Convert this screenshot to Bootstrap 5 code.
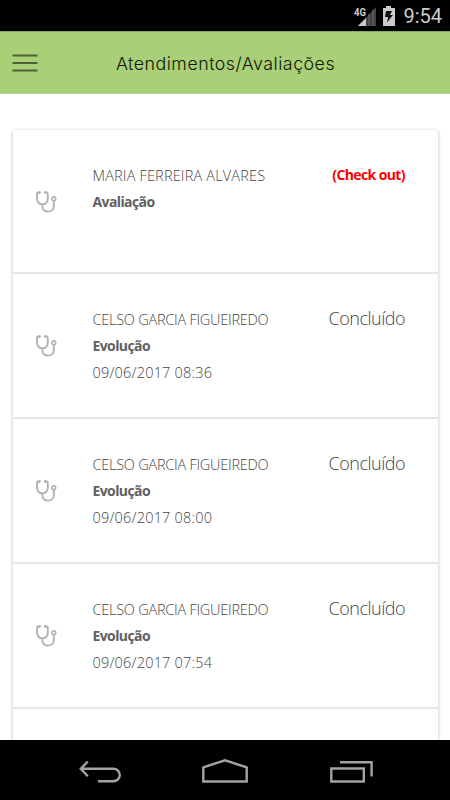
<!DOCTYPE html>
<html lang="pt-BR">
<head>
<meta charset="utf-8">
<meta name="viewport" content="width=device-width, initial-scale=1">
<title>Atendimentos/Avaliações</title>
<link href="https://cdn.jsdelivr.net/npm/bootstrap@5.3.0/dist/css/bootstrap.min.css" rel="stylesheet">
<style>
body{font-family:"Open Sans","Noto Sans",sans-serif;color:#555}
.phone{width:450px;height:800px}
.status{height:31px;color:#ccc;padding:2px 8px 0 0;font:20px/31px Roboto,sans-serif}
.topbar{height:63px;background:#a9cf77;border-top:1px solid #8cab62;border-bottom:1px solid #b9d88f}
.menu-btn{width:50px;line-height:0}
.page-title{font:300 17.8px/24px Inter,sans-serif;color:#10160a;letter-spacing:.5px;margin:2px 1px 0 0}
.visits{margin:36px 12.500px 0;border-radius:3px 3px 0 0;box-shadow:0 1px 3px 1px rgba(0,0,0,.17)}
.visits .visit{height:145px;border:0;border-bottom:2px solid #e6e6e6;padding:33px 32.500px 0 22.500px;background:#fff;color:#444}
.visits .visit:first-child{height:144px;padding-top:33px;border-radius:3px 3px 0 0}
.visit-icon{width:57.500px;padding-top:27px;line-height:0}
.line{line-height:26.3px;white-space:nowrap;font-size:14.5px}
.person{font-weight:300;letter-spacing:-.25px}
.person-wide{letter-spacing:.17px}
.kind{font-weight:700;font-size:14px;letter-spacing:-.6px;color:#606060}
.when{font-weight:300;letter-spacing:.2px}
.state{font-weight:300;font-size:18px;line-height:23px;letter-spacing:-.5px}
.checkout{font-weight:700;font-size:14px;line-height:24px;letter-spacing:-.6px;color:#f00}
.navkeys{height:60px}
</style>
<script src="https://cdn.jsdelivr.net/npm/bootstrap@5.3.0/dist/js/bootstrap.bundle.min.js"></script>
</head>
<body class="bg-white overflow-hidden">
<svg class="d-none"><symbol id="steth" viewBox="0 0 22 24"><g fill="none" stroke="#b2b2b2" stroke-width="1.9" stroke-linecap="round"><path d="M4.200 2.500H3.100Q2 2.500 2 3.800V8.500C2 12 4.400 14.400 7.400 14.400S12.800 12 12.800 8.500V3.800Q12.800 2.500 11.700 2.500H10.600M7.400 14.400V16.300C7.400 19.700 9.900 21.600 13 21.600S18.800 19.500 18.800 16.200V11"/><path d="M4.500 2.500V2.600M10.300 2.500V2.600" stroke-width="2.800"/><circle cx="18.800" cy="8.800" r="1.900" stroke-width="1.600"/></g></symbol></svg>
<div class="phone d-flex flex-column overflow-hidden">
  <div class="status bg-black d-flex justify-content-end align-items-center flex-shrink-0">
    <svg width="47" height="26" viewBox="0 0 47 26"><text x="2" y="12" textLength="12" lengthAdjust="spacingAndGlyphs" fill="#ccc" font-family="Roboto" font-size="10.500" font-weight="700">4G</text><path d="M24 3V22H6Z" fill="#444"/><path d="M14 14V22H6Z" fill="#ccc"/><path d="M17 10V22M21 6V22" stroke="#555" stroke-width="2"/><path d="M31 4H34V2H39V4H43V22H31Z" fill="#ccc"/><path d="M34 7H40L38 11H41L35 18.500L36 13H33Z" fill="#111"/></svg>
    <span class="ms-1">9:54</span>
  </div>
  <header class="topbar d-flex align-items-center flex-shrink-0">
    <div class="menu-btn"><svg width="40" height="30" viewBox="0 0 40 30"><path d="M12.500 7.500H37.500M12.500 15H37.500M12.500 22.500H37.500" stroke="#4e6036" stroke-width="2.200"/></svg></div>
    <div class="flex-grow-1 text-center pe-5"><span class="page-title d-inline-block">Atendimentos/Avaliações</span></div>
  </header>
  <main class="flex-grow-1 overflow-hidden">
    <div class="visits list-group list-group-flush">
      <div class="list-group-item visit d-flex"><div class="visit-icon"><svg width="22" height="24"><use href="#steth"/></svg></div><div class="flex-grow-1"><div class="line person person-wide">MARIA FERREIRA ALVARES</div><div class="line kind">Avaliação</div></div><div class="checkout">(Check out)</div></div>
      <div class="list-group-item visit d-flex"><div class="visit-icon"><svg width="22" height="24"><use href="#steth"/></svg></div><div class="flex-grow-1"><div class="line person">CELSO GARCIA FIGUEIREDO</div><div class="line kind">Evolução</div><div class="line when">09/06/2017 08:36</div></div><div class="state">Concluído</div></div>
      <div class="list-group-item visit d-flex"><div class="visit-icon"><svg width="22" height="24"><use href="#steth"/></svg></div><div class="flex-grow-1"><div class="line person">CELSO GARCIA FIGUEIREDO</div><div class="line kind">Evolução</div><div class="line when">09/06/2017 08:00</div></div><div class="state">Concluído</div></div>
      <div class="list-group-item visit d-flex"><div class="visit-icon"><svg width="22" height="24"><use href="#steth"/></svg></div><div class="flex-grow-1"><div class="line person">CELSO GARCIA FIGUEIREDO</div><div class="line kind">Evolução</div><div class="line when">09/06/2017 07:54</div></div><div class="state">Concluído</div></div>
      <div class="list-group-item visit"></div>
    </div>
  </main>
  <footer class="navkeys bg-black flex-shrink-0">
    <svg class="d-block" width="450" height="60" viewBox="0 740 450 60" fill="none" stroke="#a3a3a3" stroke-width="2.400"><path d="M98 781.300H113.500A6.200 6.200 0 0 0 113.500 768.800H81M87.800 761.500L80.800 768.800L87.800 776.200"/><path d="M203.300 781.500V767.300L225 760.300L246.700 767.300V781.500Z"/><path d="M331.300 768.500H363.800V781.500H331.300ZM340 762.200H371.600V776.500"/></svg>
  </footer>
</div>
</body>
</html>
